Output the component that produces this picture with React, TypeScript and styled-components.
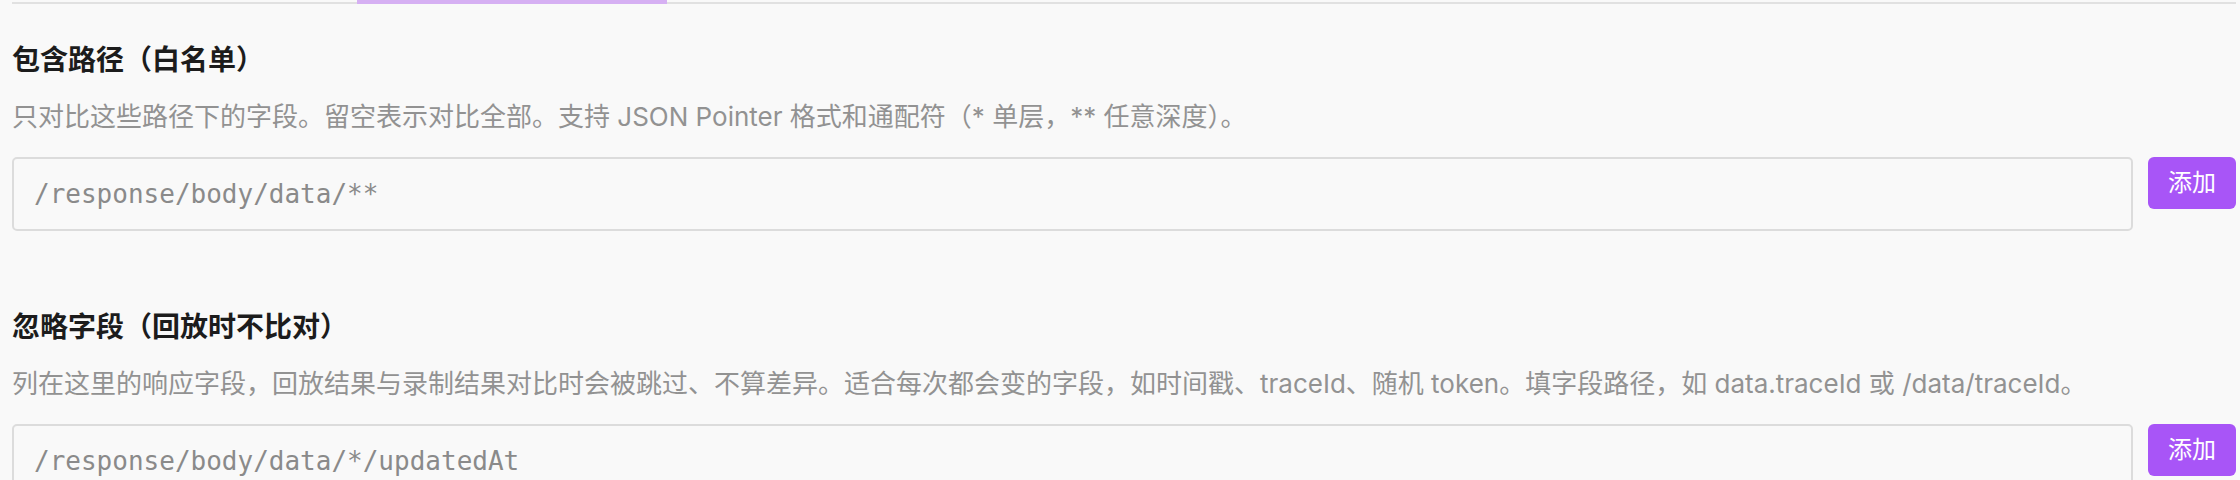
import React from "react";
import styled, { createGlobalStyle } from "styled-components";

const GlobalStyle = createGlobalStyle`
  html, body {
    margin: 0;
    padding: 0;
    background: #f9f9f9;
  }
  body {
    font-family: Inter, "Noto Sans CJK SC", "Noto Sans", sans-serif;
    -webkit-font-smoothing: antialiased;
  }
  * { box-sizing: border-box; }
`;

const Page = styled.div`
  padding: 0 4px 0 12px;
  background: #f9f9f9;
  min-height: 480px;
`;

const TabStrip = styled.div`
  display: flex;
  align-items: flex-end;
  height: 4px;
  border-bottom: 2px solid #e1e1e1;
`;

const TabIndicator = styled.div<{ $offset: number; $width: number }>`
  margin-left: ${(p) => p.$offset}px;
  width: ${(p) => p.$width}px;
  height: 4px;
  margin-bottom: -2px;
  background: #d6b0f3;
`;

const Section = styled.section`
  display: flex;
  flex-direction: column;
  margin-top: 36px;

  & + & {
    margin-top: 76px;
  }
`;

const Heading = styled.h3`
  margin: 0;
  font-family: Inter, "Noto Sans CJK SC", sans-serif;
  font-size: 28px;
  line-height: 40px;
  font-weight: 600;
  color: #1c1c1c;
`;

const Hint = styled.p`
  margin: 18px 0 0;
  font-family: Inter, "Noto Sans CJK SC", sans-serif;
  font-size: 26px;
  line-height: 38px;
  font-weight: 400;
  color: #929292;
  white-space: nowrap;
`;

const EntryRow = styled.div`
  display: flex;
  align-items: flex-start;
  gap: 15px;
  margin-top: 21px;
`;

const PathInput = styled.input`
  flex: 1;
  min-width: 0;
  height: 74px;
  padding: 0 20px;
  border: 2px solid #dcdcdc;
  border-radius: 5px;
  background: transparent;
  font-family: "DejaVu Sans Mono", "Liberation Mono", monospace;
  font-size: 26px;
  color: #333;
  outline: none;

  &::placeholder {
    color: #8a8a8a;
  }
`;

const AddButton = styled.button`
  flex: none;
  width: 88px;
  height: 52px;
  padding: 0;
  border: none;
  border-radius: 6px;
  background: #a855f7;
  color: #ffffff;
  font-family: Inter, "Noto Sans CJK SC", sans-serif;
  font-size: 24px;
  line-height: 52px;
  font-weight: 400;
  cursor: pointer;
`;

type FieldListProps = {
  title: string;
  hint: string;
  placeholder: string;
};

function FieldList({ title, hint, placeholder }: FieldListProps) {
  return (
    <Section>
      <Heading>{title}</Heading>
      <Hint>{hint}</Hint>
      <EntryRow>
        <PathInput placeholder={placeholder} />
        <AddButton type="button">添加</AddButton>
      </EntryRow>
    </Section>
  );
}

export default function App() {
  return (
    <>
      <GlobalStyle />
      <Page>
        <TabStrip>
          <TabIndicator $offset={345} $width={310} />
        </TabStrip>
        <FieldList
          title="包含路径（白名单）"
          hint="只对比这些路径下的字段。留空表示对比全部。支持 JSON Pointer 格式和通配符（* 单层，** 任意深度）。"
          placeholder="/response/body/data/**"
        />
        <FieldList
          title="忽略字段（回放时不比对）"
          hint="列在这里的响应字段，回放结果与录制结果对比时会被跳过、不算差异。适合每次都会变的字段，如时间戳、traceId、随机 token。填字段路径，如 data.traceId 或 /data/traceId。"
          placeholder="/response/body/data/*/updatedAt"
        />
      </Page>
    </>
  );
}
